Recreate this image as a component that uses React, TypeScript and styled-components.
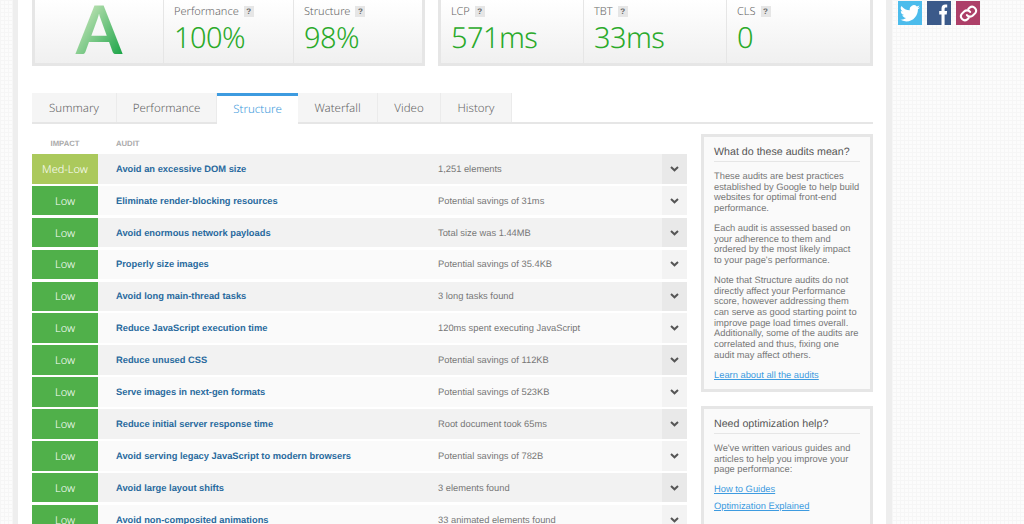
import styled, { createGlobalStyle } from "styled-components";

const GlobalStyle = createGlobalStyle`
  html, body {
    margin: 0;
    padding: 0;
    height: 524px;
    overflow: hidden;
    background-color: #fcfcfc;
    background-image:
      linear-gradient(#f6f6f6 1px, transparent 1px),
      linear-gradient(90deg, #f6f6f6 1px, transparent 1px);
    background-size: 4px 4px;
    font-family: "Liberation Sans", Arial, sans-serif;
    text-rendering: geometricPrecision;
  }
`;

const HEADING = `"Noto Sans", "Open Sans", sans-serif`;

const Shell = styled.div`
  display: flex;
  align-items: flex-start;
  padding-left: 13px;
`;

const Page = styled.div`
  width: 868px;
  height: 524px;
  flex: none;
  display: flex;
  background: #fff;
  border-left: 5px solid #eeeeee;
  border-right: 6px solid #eeeeee;
  overflow: hidden;
`;

const Main = styled.div`
  width: 841px;
  margin-left: 14px;
  display: flex;
  flex-direction: column;
`;

const Social = styled.div`
  margin: 1px 0 0 6px;
  display: flex;
  gap: 5px;
`;

const SocialIcon = styled.a<{ $bg: string }>`
  width: 24px;
  height: 24px;
  background: ${(p) => p.$bg};
  display: flex;
  align-items: center;
  justify-content: center;
`;

const ScoreRow = styled.div`
  display: flex;
  gap: 13px;
  height: 66px;
  flex: none;
`;

const Card = styled.div<{ $w: number }>`
  width: ${(p) => p.$w}px;
  box-sizing: border-box;
  display: flex;
  border: 3px solid #e6e6e6;
  border-top: none;
  background: linear-gradient(#ffffff, #f0f0f0);
`;

const Grade = styled.div`
  width: 128px;
  height: 63px;
  font-family: Lato, sans-serif;
  font-size: 67px;
  line-height: 58px;
  font-weight: 700;
  text-align: center;
  background: linear-gradient(125deg, #c4e4b8 32%, #1fa64a 72%);
  -webkit-background-clip: text;
  background-clip: text;
  color: transparent;
`;

const Metric = styled.div<{ $w: number; $first?: boolean }>`
  width: ${(p) => p.$w}px;
  box-sizing: border-box;
  border-left: ${(p) => (p.$first ? "none" : "1px solid #e6e6e6")};
  padding: 4px 0 0 10px;
`;

const MetricLabel = styled.div`
  display: flex;
  align-items: center;
  gap: 5px;
  font-family: ${HEADING};
  font-weight: 300;
  font-size: 11px;
  line-height: 15px;
  color: #666;
`;

const Hint = styled.span`
  width: 10px;
  height: 11px;
  background: #e6e6e6;
  color: #666;
  font-family: "Liberation Sans", sans-serif;
  font-size: 8px;
  font-weight: 700;
  line-height: 11px;
  text-align: center;
`;

const MetricValue = styled.div`
  font-family: ${HEADING};
  font-weight: 300;
  font-size: 29px;
  line-height: 38px;
  color: #2aaa2a;
  letter-spacing: -0.6px;
`;

const Tabs = styled.div`
  display: flex;
  flex: none;
  margin-top: 27px;
  height: 31px;
  box-sizing: border-box;
  border-bottom: 2px solid #e6e6e6;
`;

const Tab = styled.div<{ $w: number; $active?: boolean }>`
  width: ${(p) => p.$w}px;
  box-sizing: border-box;
  height: ${(p) => (p.$active ? "31px" : "29px")};
  text-align: center;
  font-family: ${HEADING};
  font-weight: 300;
  font-size: 11.5px;
  line-height: ${(p) => (p.$active ? "28px" : "31px")};
  color: ${(p) => (p.$active ? "#3d9bdc" : "#666")};
  background: ${(p) => (p.$active ? "#fff" : "#f5f5f5")};
  border-top: ${(p) => (p.$active ? "3px solid #3d9be0" : "none")};
  border-right: ${(p) => (p.$active ? "none" : "1px solid #ebebeb")};
`;

const Content = styled.div`
  display: flex;
  flex: none;
  margin-top: 10px;
  gap: 14px;
  align-items: flex-start;
`;

const AuditColumn = styled.div`
  width: 655px;
`;

const HeaderRow = styled.div`
  display: grid;
  grid-template-columns: 66px 1fr;
  height: 20px;
  font-size: 7.7px;
  font-weight: 700;
  line-height: 19px;
  color: #aaa;
`;

const HeaderCell = styled.div<{ $center?: boolean }>`
  text-align: ${(p) => (p.$center ? "center" : "left")};
  padding-left: ${(p) => (p.$center ? "0" : "18px")};
`;

const AuditList = styled.div`
  display: grid;
  grid-auto-rows: 29.5px;
  row-gap: 2.4px;
`;

const Row = styled.div<{ $odd: boolean }>`
  display: grid;
  grid-template-columns: 66px 340px 1fr 25px;
  align-items: stretch;
  background: ${(p) => (p.$odd ? "#f2f2f2" : "#fafafa")};
`;

const Impact = styled.div<{ $bg: string }>`
  background: ${(p) => p.$bg};
  color: #fff;
  font-family: ${HEADING};
  font-weight: 300;
  font-size: 11px;
  padding-top: 1px;
  display: flex;
  align-items: center;
  justify-content: center;
`;

const AuditName = styled.div`
  padding-left: 18px;
  font-size: 9.33px;
  font-weight: 700;
  color: #296a9e;
  display: flex;
  align-items: center;
`;

const AuditValue = styled.div`
  font-size: 9.33px;
  color: #777;
  display: flex;
  align-items: center;
`;

const Toggle = styled.div<{ $odd: boolean }>`
  background: ${(p) => (p.$odd ? "#e9e9e9" : "#f3f3f3")};
  display: flex;
  align-items: center;
  justify-content: center;
`;

const Sidebar = styled.div`
  width: 172px;
  display: flex;
  flex-direction: column;
  gap: 14px;
`;

const Box = styled.div<{ $h: number }>`
  height: ${(p) => p.$h}px;
  box-sizing: border-box;
  border: 3px solid #e6e6e6;
  background: #fafafa;
  padding: 8px 10px 0;
  flex: none;
`;

const BoxTitle = styled.div`
  font-size: 10.67px;
  line-height: 15px;
  color: #555;
  padding-bottom: 1px;
  border-bottom: 1px solid #e6e6e6;
  margin-bottom: 9px;
`;

const BoxText = styled.p`
  margin: 0 0 9.33px;
  font-size: 9.33px;
  line-height: 10.67px;
  color: #777;
`;

const BoxLink = styled.a`
  display: block;
  font-size: 9.33px;
  line-height: 10.67px;
  color: #3d9be0;
  text-decoration: underline;
  margin-bottom: 6.33px;
`;

const Chevron = () => (
  <svg width="9" height="6" viewBox="0 0 9 6" fill="none">
    <path d="M1 1 4.500 4.300 8 1" stroke="#555" strokeWidth="2" />
  </svg>
);

const audits = [
  ["Avoid an excessive DOM size", "1,251 elements", "Med-Low"],
  ["Eliminate render-blocking resources", "Potential savings of 31ms", "Low"],
  ["Avoid enormous network payloads", "Total size was 1.44MB", "Low"],
  ["Properly size images", "Potential savings of 35.4KB", "Low"],
  ["Avoid long main-thread tasks", "3 long tasks found", "Low"],
  ["Reduce JavaScript execution time", "120ms spent executing JavaScript", "Low"],
  ["Reduce unused CSS", "Potential savings of 112KB", "Low"],
  ["Serve images in next-gen formats", "Potential savings of 523KB", "Low"],
  ["Reduce initial server response time", "Root document took 65ms", "Low"],
  ["Avoid serving legacy JavaScript to modern browsers", "Potential savings of 782B", "Low"],
  ["Avoid large layout shifts", "3 elements found", "Low"],
  ["Avoid non-composited animations", "33 animated elements found", "Low"],
];

const tabs = [
  ["Summary", 85],
  ["Performance", 100],
  ["Structure", 81],
  ["Waterfall", 80],
  ["Video", 63],
  ["History", 71],
] as const;

export default function App() {
  return (
    <Shell>
      <GlobalStyle />
      <Page>
        <Main>
          <ScoreRow>
            <Card $w={393}>
              <Grade>A</Grade>
              <Metric $w={130}>
                <MetricLabel>
                  Performance <Hint>?</Hint>
                </MetricLabel>
                <MetricValue>100%</MetricValue>
              </Metric>
              <Metric $w={129}>
                <MetricLabel>
                  Structure <Hint>?</Hint>
                </MetricLabel>
                <MetricValue>98%</MetricValue>
              </Metric>
            </Card>
            <Card $w={435}>
              <Metric $w={142} $first>
                <MetricLabel>
                  LCP <Hint>?</Hint>
                </MetricLabel>
                <MetricValue>571ms</MetricValue>
              </Metric>
              <Metric $w={143}>
                <MetricLabel>
                  TBT <Hint>?</Hint>
                </MetricLabel>
                <MetricValue>33ms</MetricValue>
              </Metric>
              <Metric $w={144}>
                <MetricLabel>
                  CLS <Hint>?</Hint>
                </MetricLabel>
                <MetricValue>0</MetricValue>
              </Metric>
            </Card>
          </ScoreRow>
          <Tabs>
            {tabs.map(([name, w]) => (
              <Tab key={name} $w={w} $active={name === "Structure"}>
                {name}
              </Tab>
            ))}
          </Tabs>
          <Content>
            <AuditColumn>
              <HeaderRow>
                <HeaderCell $center>IMPACT</HeaderCell>
                <HeaderCell>AUDIT</HeaderCell>
              </HeaderRow>
              <AuditList>
                {audits.map(([name, value, impact], i) => (
                  <Row key={name} $odd={i % 2 === 0}>
                    <Impact $bg={impact === "Low" ? "#50b04a" : "#abc95c"}>{impact}</Impact>
                    <AuditName>{name}</AuditName>
                    <AuditValue>{value}</AuditValue>
                    <Toggle $odd={i % 2 === 0}>
                      <Chevron />
                    </Toggle>
                  </Row>
                ))}
              </AuditList>
            </AuditColumn>
            <Sidebar>
              <Box $h={258}>
                <BoxTitle>What do these audits mean?</BoxTitle>
                <BoxText>
                  These audits are best practices established by Google to help build websites for
                  optimal front-end performance.
                </BoxText>
                <BoxText>
                  Each audit is assessed based on your adherence to them and ordered by the most
                  likely impact to your page's performance.
                </BoxText>
                <BoxText>
                  Note that Structure audits do not directly affect your Performance score, however
                  addressing them can serve as good starting point to improve page load times
                  overall. Additionally, some of the audits are correlated and thus, fixing one
                  audit may affect others.
                </BoxText>
                <BoxLink>Learn about all the audits</BoxLink>
              </Box>
              <Box $h={140}>
                <BoxTitle>Need optimization help?</BoxTitle>
                <BoxText>
                  We've written various guides and articles to help you improve your page
                  performance:
                </BoxText>
                <BoxLink>How to Guides</BoxLink>
                <BoxLink>Optimization Explained</BoxLink>
              </Box>
            </Sidebar>
          </Content>
        </Main>
      </Page>
      <Social>
        <SocialIcon $bg="#4cbcec">
          <svg width="20" height="17" viewBox="0 0 24 20" fill="#fff">
            <path d="M24 2.400a9.800 9.800 0 0 1-2.800.8A4.900 4.900 0 0 0 23.300.5a9.800 9.800 0 0 1-3.100 1.200 4.900 4.900 0 0 0-8.400 4.500A14 14 0 0 1 1.700.9a4.900 4.900 0 0 0 1.500 6.600 4.900 4.900 0 0 1-2.200-.6v.1a4.900 4.900 0 0 0 3.900 4.800 4.900 4.900 0 0 1-2.200.1 4.900 4.900 0 0 0 4.600 3.400A9.900 9.900 0 0 1 0 17.300 13.900 13.900 0 0 0 7.500 19.500c9.100 0 14-7.500 14-14v-.6A10 10 0 0 0 24 2.400z" />
          </svg>
        </SocialIcon>
        <SocialIcon $bg="#3b5a8a">
          <svg width="24" height="24" viewBox="0 0 24 24" fill="#fff">
            <path d="M14.500 24V13.500h-2.300V10h2.300V7.600c0-2.800 1.400-4.100 3.800-4.100.8 0 1.400.1 1.900.1v3h-1.200c-1.100 0-1.400.6-1.400 1.500V10h2.500l-.4 3.500h-2.100V24z" />
          </svg>
        </SocialIcon>
        <SocialIcon $bg="#ad3f68">
          <svg width="19" height="19" viewBox="0 0 24 24" fill="none" stroke="#fff" strokeWidth="2.600" strokeLinecap="round">
            <path d="M10 14a5 5 0 0 0 7.500.5l3-3a5 5 0 0 0-7-7l-1.700 1.700" />
            <path d="M14 10a5 5 0 0 0-7.500-.5l-3 3a5 5 0 0 0 7 7l1.700-1.700" />
          </svg>
        </SocialIcon>
      </Social>
    </Shell>
  );
}
